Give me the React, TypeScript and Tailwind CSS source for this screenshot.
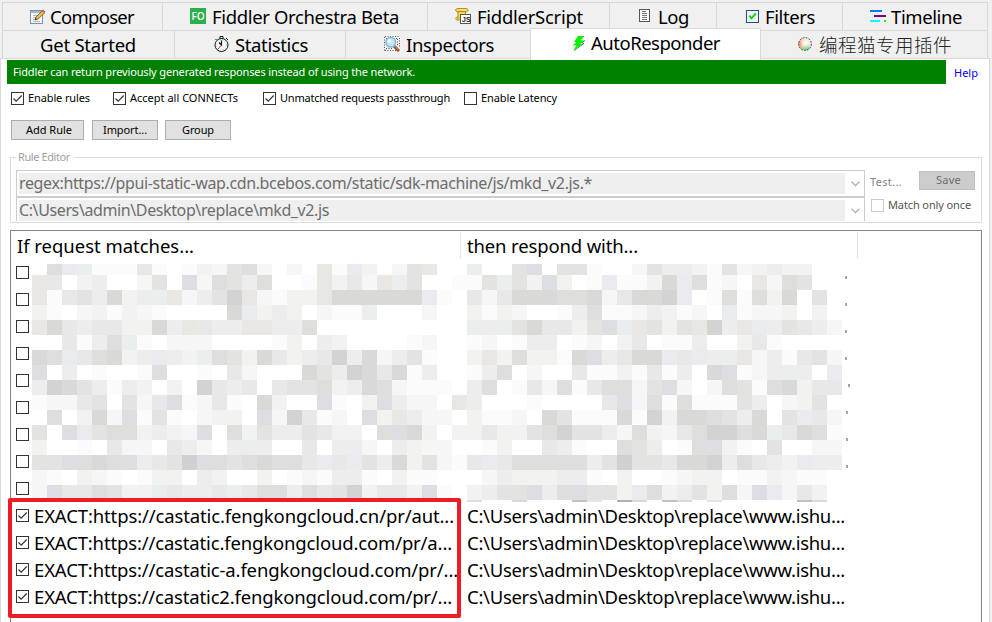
import { useLayoutEffect, useRef, useState } from "react";
import type { ReactNode } from "react";

/** Single-line text whose letter spacing is adjusted so that it fills `w` pixels. */
function Fit({ w, children, className = "" }: { w: number; children: string; className?: string }) {
  const ref = useRef<HTMLSpanElement>(null);
  const [spacing, setSpacing] = useState(0);
  useLayoutEffect(() => {
    const natural = ref.current?.getBoundingClientRect().width ?? w;
    setSpacing((w - natural) / children.length);
  }, [w, children]);
  return (
    <span ref={ref} className={`inline-block shrink-0 whitespace-pre ${className}`} style={{ letterSpacing: spacing }}>
      {children}
    </span>
  );
}

const ComposerIcon = () => (
  <svg width="16" height="16" viewBox="0 0 16 16">
    <rect x="0.5" y="1.5" width="12" height="13" fill="#f4f8fc" stroke="#7d93ad" />
    <path d="M1 2h11v2H1z" fill="#9db7d6" />
    <path d="M3 6.5h5M3 8.5h4M3 10.500h2M3 12.5h7" stroke="#a9b8c9" />
    <path d="M5 11l1-3 6.500-6.500 2.500 2L8 10z" fill="#f0b94c" stroke="#6e5324" strokeWidth="0.800" />
    <path d="M11.500 2l1.500-1.500 2.300 2L14 4z" fill="#c96a4a" />
    <path d="M5 11l.8-2 1.200 1.200z" fill="#222" />
  </svg>
);
const OrchestraIcon = () => (
  <span className="flex h-4 w-4 items-center justify-center bg-[#2bb04c] pb-px font-['Open_Sans',sans-serif] text-[10px] leading-none font-semibold text-white">
    FO
  </span>
);
const ScriptIcon = () => (
  <svg width="16" height="16" viewBox="0 0 16 16">
    <path d="M2.500.5h9c2 0 2 3 0 3h-1v8l-7 .5c-2 1-4-2-1.500-3h1v-5c-3 0-3-3.500-.5-3.500z" fill="#f5d75c" stroke="#b18a1c" />
    <path d="M3 3.500h8M4 9.500l-2 2" stroke="#b18a1c" fill="none" />
    <path d="M5 1.500h6" stroke="#fdf2b0" />
    <rect x="5.500" y="6.500" width="10" height="9" fill="#fff" stroke="#555" />
    <text x="7" y="14" fontSize="7" fontWeight="700" fontFamily="Liberation Sans, sans-serif" fill="#222">JS</text>
  </svg>
);
const LogIcon = () => (
  <svg width="11" height="13" viewBox="0 0 11 13">
    <rect x="0.5" y="0.5" width="10" height="12" fill="#fff" stroke="#555" />
    <path d="M3 2.500h4M3 4.500h5M3 6.500h5M3 8.500h5M3 10.500h5" stroke="#777" />
  </svg>
);
const FiltersIcon = () => (
  <svg width="13" height="13" viewBox="0 0 13 13">
    <rect x="0.5" y="0.5" width="12" height="12" fill="#f4f4f4" stroke="#1c5180" />
    <path d="M3.300 5.500l2.200 2.800 4.300-4.800" stroke="#0d0" strokeWidth="2" fill="none" />
  </svg>
);
const TimelineIcon = () => (
  <svg width="17" height="13" viewBox="0 0 17 13" shapeRendering="crispEdges">
    <path d="M0 0h12v2H0z" fill="#0080ff" />
    <path d="M4 5h12v2H4z" fill="#800080" />
    <path d="M0 10h10v2H0z" fill="#0ff" />
    <path d="M14 10h2v2h-2z" fill="#0f0" />
  </svg>
);
const ClockIcon = () => (
  <svg width="16" height="16" viewBox="0 0 16 16">
    <path d="M6 .5h3v2H6zM12 2l2 2M2.500 3l-1 1" stroke="#111" fill="#fff" />
    <circle cx="7.500" cy="9" r="6.500" fill="#fff" stroke="#111" strokeWidth="1" />
    <circle cx="7.500" cy="9" r="4.900" fill="none" stroke="#4dd" strokeDasharray="1 1.600" />
    <path d="M7.500 4.500V9L5 6.500" stroke="#111" strokeWidth="1.200" fill="none" />
    <path d="M7.500 9l-3.500 4" stroke="#e22" />
  </svg>
);
const InspectIcon = () => (
  <svg width="16" height="16" viewBox="0 0 16 16">
    <path d="M1 .5h14M.5 1v14M1 14.500h12M15.500 2v10M2 2.500h12M2 12.500h7M13.500 3v7" stroke="#555" strokeDasharray="1 1.500" />
    <path d="M10 10l5 5" stroke="#8a4a20" strokeWidth="3" />
    <path d="M10.500 10l4.500 4.500" stroke="#e29a55" strokeWidth="1" />
    <circle cx="6.800" cy="6.300" r="4.800" fill="#bfe6fb" stroke="#82b7e4" strokeWidth="1.500" />
    <circle cx="5.500" cy="5" r="2" fill="#f2fbff" />
  </svg>
);
const BoltIcon = () => (
  <svg width="14" height="15" viewBox="0 0 14 15">
    <path d="M13 4.500L9.500 6.500 12 7.500 2 14.500" fill="none" stroke="#245c24" strokeWidth="0.800" />
    <path d="M6 0h6.500L8.500 4.500h4L8 8h2.500L1 14.500 4.500 9.500H.5L4.500 6H2z" fill="#00f400" />
  </svg>
);
const BallIcon = () => (
  <svg width="14" height="14" viewBox="0 0 14 14">
    <defs>
      <radialGradient id="ballWarm" cx="0.05" cy="0.5" r="0.6">
        <stop offset="0" stopColor="#f0885c" /><stop offset="1" stopColor="#f0885c" stopOpacity="0" />
      </radialGradient>
      <radialGradient id="ballGreen" cx="0.6" cy="1" r="0.55">
        <stop offset="0" stopColor="#5cd070" /><stop offset="1" stopColor="#5cd070" stopOpacity="0" />
      </radialGradient>
      <radialGradient id="ballShine" cx="0.48" cy="0.45" r="0.4">
        <stop offset="0" stopColor="#fff" /><stop offset="1" stopColor="#fff" stopOpacity="0" />
      </radialGradient>
    </defs>
    <circle cx="7" cy="7" r="6.500" fill="#f1ebdf" />
    <circle cx="7" cy="7" r="6.500" fill="url(#ballWarm)" />
    <circle cx="7" cy="7" r="6.500" fill="url(#ballGreen)" />
    <circle cx="7" cy="7" r="6.500" fill="url(#ballShine)" />
    <circle cx="7" cy="7" r="6.400" fill="none" stroke="#333" strokeWidth="0.900" strokeDasharray="1.800 1.200" />
  </svg>
);

function Tab({ box, label, w, icon, iconBox = "", text = "text-[18.500px]" }: {
  box: string; label: string; w: number; icon?: ReactNode; iconBox?: string; text?: string;
}) {
  return (
    <div className={`flex shrink-0 items-start border-r border-[#d9d9d9] ${box}`}>
      {icon && <span className={`flex shrink-0 ${iconBox}`}>{icon}</span>}
      <Fit w={w} className={`leading-[22px] ${text}`}>{label}</Fit>
    </div>
  );
}

function Check({ checked = false, muted = false }: { checked?: boolean; muted?: boolean }) {
  return (
    <span className={`flex h-[13px] w-[13px] shrink-0 border bg-white ${muted ? "border-[#ccc]" : "border-[#333]"}`}>
      {checked && (
        <svg width="11" height="11" viewBox="0 0 11 11">
          <path d="M1.500 5.500l2.700 2.700L9.700 2.500" fill="none" stroke="#333" strokeWidth="1.200" />
        </svg>
      )}
    </span>
  );
}

const Chevron = () => (
  <svg width="9" height="6" viewBox="0 0 9 6">
    <path d="M.5.8l4 3.700 4-3.700" fill="none" stroke="#b0b0b0" strokeWidth="1.300" />
  </svg>
);

/* Tone of each mosaic cell: digits are neutral greys, letters are tinted. */
const tones: Record<string, string> = {
  "0": "#ffffff", "1": "#fbfbfb", "2": "#f6f6f6", "3": "#f2f2f1", "4": "#ededed",
  "5": "#e8e8e8", "6": "#e3e3e2", "7": "#dededd", "8": "#d9d9d8", "9": "#d3d3d3",
  b: "#e9ebee", g: "#eaeeed", w: "#e9e7e4", c: "#dcdee1", k: "#cfd0d1", m: "#c0c1c2", n: "#b0b0b0",
};
const mosaic = [
  "07bg111w101326" + "72020w1b3026w00" + "g006c06610026" + "443162343300",
  "w503400260c276" + "47001w352wg6001" + "16g63c301b113" + "8b7120w27600",
  "w156483ggw2469" + "w2133w888888b10" + "5258887782588" + "9b0171738060",
  "31023132100008" + "b3430211g000200" + "3132001471124" + "3120b1223030",
  "w854553384w544" + "ww4470000000000" + "g4g685536cbw6" + "36w94wb46542",
  "005147g1022200" + "001304300001200" + "1201440120350" + "114003510000",
  "87b57834b43g76" + "385345948246100" + "3w373318c4w88" + "b5b4gw241562",
  "c0401001700105" + "200086498581400" + "1470200511315" + "1408c124g40b",
  "49864143030954" + "505667348721110" + "4701527157726" + "c20276178355",
  "122560625c1251" + "08300c103c4220w" + "4000100005c27" + "171116402360",
  "070382c1610233" + "0c295120c3w4220" + "3112086111819" + "388764806b52",
  "60cb6773g32c07" + "3644653307c8303" + "3533679664273" + "2579978g5871",
  "30010522054204" + "g40050442043220" + "0130054100764" + "017c31060022",
  "66c787c456kc76" + "78775b5b6483621" + "5b57777746k66" + "588947543b44",
  "21032101330430" + "030121441031100" + "0243334410300" + "123301132110",
  "2c557633g5445g" + "577475693553c10" + "3466c47c663b7" + "346372cb2530",
  "00000000000000" + "000000000000000" + "7008100m50n80" + "m80600100m80",
];

const rules = [
  { match: "EXACT:https://castatic.fengkongcloud.cn/pr/aut...", w: 420 },
  { match: "EXACT:https://castatic.fengkongcloud.com/pr/a...", w: 418 },
  { match: "EXACT:https://castatic-a.fengkongcloud.com/pr/...", w: 424 },
  { match: "EXACT:https://castatic2.fengkongcloud.com/pr/...", w: 418 },
];
const dotOffset = ["w-[847px]", "w-[847px]", "w-[847px]", "w-[847px]", "w-[850px]", "w-[848px]", "w-[848px]", "w-[848px]"];

export default function App() {
  return (
    <div className="flex h-[622px] w-[992px] flex-col overflow-hidden bg-[#f0f0f0] pt-[2px] font-['Noto_Sans','Noto_Sans_CJK_SC',sans-serif] text-black">
      <div className="ml-[2px] flex h-[28px] w-[986px] border-t border-l border-[#d9d9d9]">
        <Tab box="w-[160px] pl-[27px] pt-[3px]" label="Composer" w={84} icon={<ComposerIcon />} iconBox="mt-[3px] mr-[4px]" />
        <Tab box="w-[265px] pl-[27px] pt-[3px]" label="Fiddler Orchestra Beta" w={187} icon={<OrchestraIcon />} iconBox="mt-[2px] mr-[6px]" />
        <Tab box="w-[182px] pl-[27px] pt-[3px]" label="FiddlerScript" w={106} icon={<ScriptIcon />} iconBox="mt-[2px] mr-[6px]" />
        <Tab box="w-[107px] pl-[29px] pt-[3px]" label="Log" w={31} icon={<LogIcon />} iconBox="mt-[3px] mr-[8px]" />
        <Tab box="w-[126px] pl-[29px] pt-[3px]" label="Filters" w={50} icon={<FiltersIcon />} iconBox="mt-[4px] mr-[6px]" />
        <Tab box="w-[145px] pl-[27px] pt-[3px]" label="Timeline" w={71} icon={<TimelineIcon />} iconBox="mt-[4px] mr-[4px]" />
      </div>
      <div className="relative z-10 -mb-px ml-[2px] flex h-[29px] w-[986px]">
        <Tab box="h-[29px] w-[173px] border-y border-l pl-[37px] pt-[3px]" label="Get Started" w={96} />
        <Tab box="h-[29px] w-[171px] border-y pl-[39px] pt-[3px]" label="Statistics" w={73} icon={<ClockIcon />} iconBox="mt-[2px] mr-[5px]" />
        <Tab box="h-[29px] w-[185px] border-y pl-[38px] pt-[3px]" label="Inspectors" w={88} icon={<InspectIcon />} iconBox="mt-[2px] mr-[6px]" />
        <Tab box="-mt-[2px] -ml-px h-[32px] w-[231px] border-t border-l bg-white pl-[41px] pt-[3px]" label="AutoResponder" w={129} icon={<BoltIcon />} iconBox="mt-[4px] mr-[5px]" />
        <Tab box="h-[29px] w-[227px] border-y pl-[37px] pt-[3px]" label="编程猫专用插件" w={133} icon={<BallIcon />} iconBox="mt-[3px] mr-[7px]" text="-mt-px font-['Noto_Sans_CJK_SC',sans-serif] text-[18.500px] font-light text-[#222]" />
      </div>

      <div className="flex w-[990px] grow flex-col border-x border-t border-[#d9d9d9] bg-white">
        <div className="mt-px flex h-[24px] w-full pl-[6px]">
          <div className="flex w-[939px] bg-[#008000] pt-[4px] pl-[6px] text-[11px] leading-[16px] text-white">
            <Fit w={402}>Fiddler can return previously generated responses instead of using the network.</Fit>
          </div>
          <div className="pt-[5px] pl-[8px] text-[11px] leading-[16px] text-[#00f]"><Fit w={24}>Help</Fit></div>
        </div>

        <div className="mt-[8px] flex h-[13px] pl-[10px] text-[11px] leading-[11px]">
          <Check checked /><span className="flex w-[89px] pl-[4px]"><Fit w={62}>Enable rules</Fit></span>
          <Check checked /><span className="flex w-[137px] pl-[4px]"><Fit w={108}>Accept all CONNECTs</Fit></span>
          <Check checked /><span className="flex w-[188px] pl-[4px]"><Fit w={170}>Unmatched requests passthrough</Fit></span>
          <Check /><span className="flex pl-[4px]"><Fit w={76}>Enable Latency</Fit></span>
        </div>

        <div className="mt-[15px] flex h-[20px] pl-[10px] text-[11px] leading-[17px]">
          <div className="mr-[8px] w-[73px] border border-[#adadad] bg-[#e1e1e1] pl-[14px]"><Fit w={46}>Add Rule</Fit></div>
          <div className="mr-[7px] w-[66px] border border-[#adadad] bg-[#e1e1e1] pl-[10px]"><Fit w={44}>Import...</Fit></div>
          <div className="w-[66px] border border-[#adadad] bg-[#e1e1e1] pl-[16px]"><Fit w={32}>Group</Fit></div>
        </div>

        <div className="mt-[17px] ml-[9px] flex h-[66px] w-[972px] border border-[#dcdcdc] text-[11px] text-[#838383]">
          <div className="-mt-[8px] w-[855px]">
            <div className="ml-[6px] flex h-[16px] w-[57px] bg-white pl-px leading-[14px] text-[#a0a0a0]"><Fit w={52}>Rule Editor</Fit></div>
            <div className="mt-[4px] ml-[5px] flex h-[27px] w-[849px] border border-[#ccc] p-[2px]">
              <div className="w-[826px] bg-[#efefef] text-[16px] leading-[21px] text-[#6d6d6d]"><Fit w={573}>regex:https://ppui-static-wap.cdn.bcebos.com/static/sdk-machine/js/mkd_v2.js.*</Fit></div>
              <div className="flex grow items-center justify-center pl-[3px]"><Chevron /></div>
            </div>
            <div className="ml-[5px] flex h-[24px] w-[849px] border-x border-t border-[#ccc] px-[2px] pt-[2px]">
              <div className="w-[826px] bg-[#efefef] text-[16px] leading-[21px] text-[#6d6d6d]"><Fit w={310}>C:\Users\admin\Desktop\replace\mkd_v2.js</Fit></div>
              <div className="flex grow items-center justify-center pl-[3px]"><Chevron /></div>
            </div>
          </div>
          <div className="flex grow flex-col pt-[13px] pl-[4px]">
            <div className="flex h-[19px]">
              <span className="flex w-[49px] pt-[3px] leading-[16px]"><Fit w={32}>Test...</Fit></span>
              <span className="flex w-[56px] border border-[#bfbfbf] bg-[#ccc] pl-[16px] leading-[15px] text-[#6d6d6d]"><Fit w={25}>Save</Fit></span>
            </div>
            <div className="mt-[9px] flex h-[13px] pl-px leading-[11px] text-[#555]">
              <Check muted /><span className="flex pl-[4px]"><Fit w={83}>Match only once</Fit></span>
            </div>
          </div>
        </div>

        <div className="relative mt-[7px] ml-[9px] h-[392px] w-[972px] shrink-0 border border-b-0 border-[#828790] text-[18.500px] leading-[27px]">
          <div className="flex h-[28px] pt-px">
            <div className="w-[450px] border-r border-[#e5e5e5] pl-[6px]"><Fit w={177}>If request matches...</Fit></div>
            <div className="w-[397px] border-r border-[#e5e5e5] pl-[6px]"><Fit w={171}>then respond with...</Fit></div>
          </div>
          {Array.from({ length: 9 }, (_, i) => (
            <div key={i} className="flex h-[27px] items-center pl-[5px]">
              <Check />
              {dotOffset[i] && (
                <span className={`-ml-[29px] flex shrink-0 justify-end pt-[10px] ${dotOffset[i]}`}>
                  <span className="h-[3px] w-[2px] bg-[#9aa6b8]" />
                </span>
              )}
            </div>
          ))}
          {rules.map((r) => (
            <div key={r.match} className="flex h-[27px] pl-[5px]">
              <span className="pt-[7px]"><Check checked /></span>
              <span className="w-[438px] pl-[5px]"><Fit w={r.w}>{r.match}</Fit></span>
              <Fit w={378}>C:\Users\admin\Desktop\replace\www.ishu...</Fit>
            </div>
          ))}
          <div className="absolute top-[33px] left-[21px] grid w-[810px] grid-cols-[repeat(54,15px)] grid-rows-[11px_repeat(15,15px)_2px]">
            {mosaic.flatMap((row, y) =>
              row.split("").map((t, x) => <i key={`${y}-${x}`} style={{ backgroundColor: tones[t] }} />),
            )}
          </div>
          <div className="absolute top-[267px] -left-[3px] h-[120px] w-[453px] rounded-[2px] border-4 border-[#ee1c25]" />
        </div>
      </div>
    </div>
  );
}
